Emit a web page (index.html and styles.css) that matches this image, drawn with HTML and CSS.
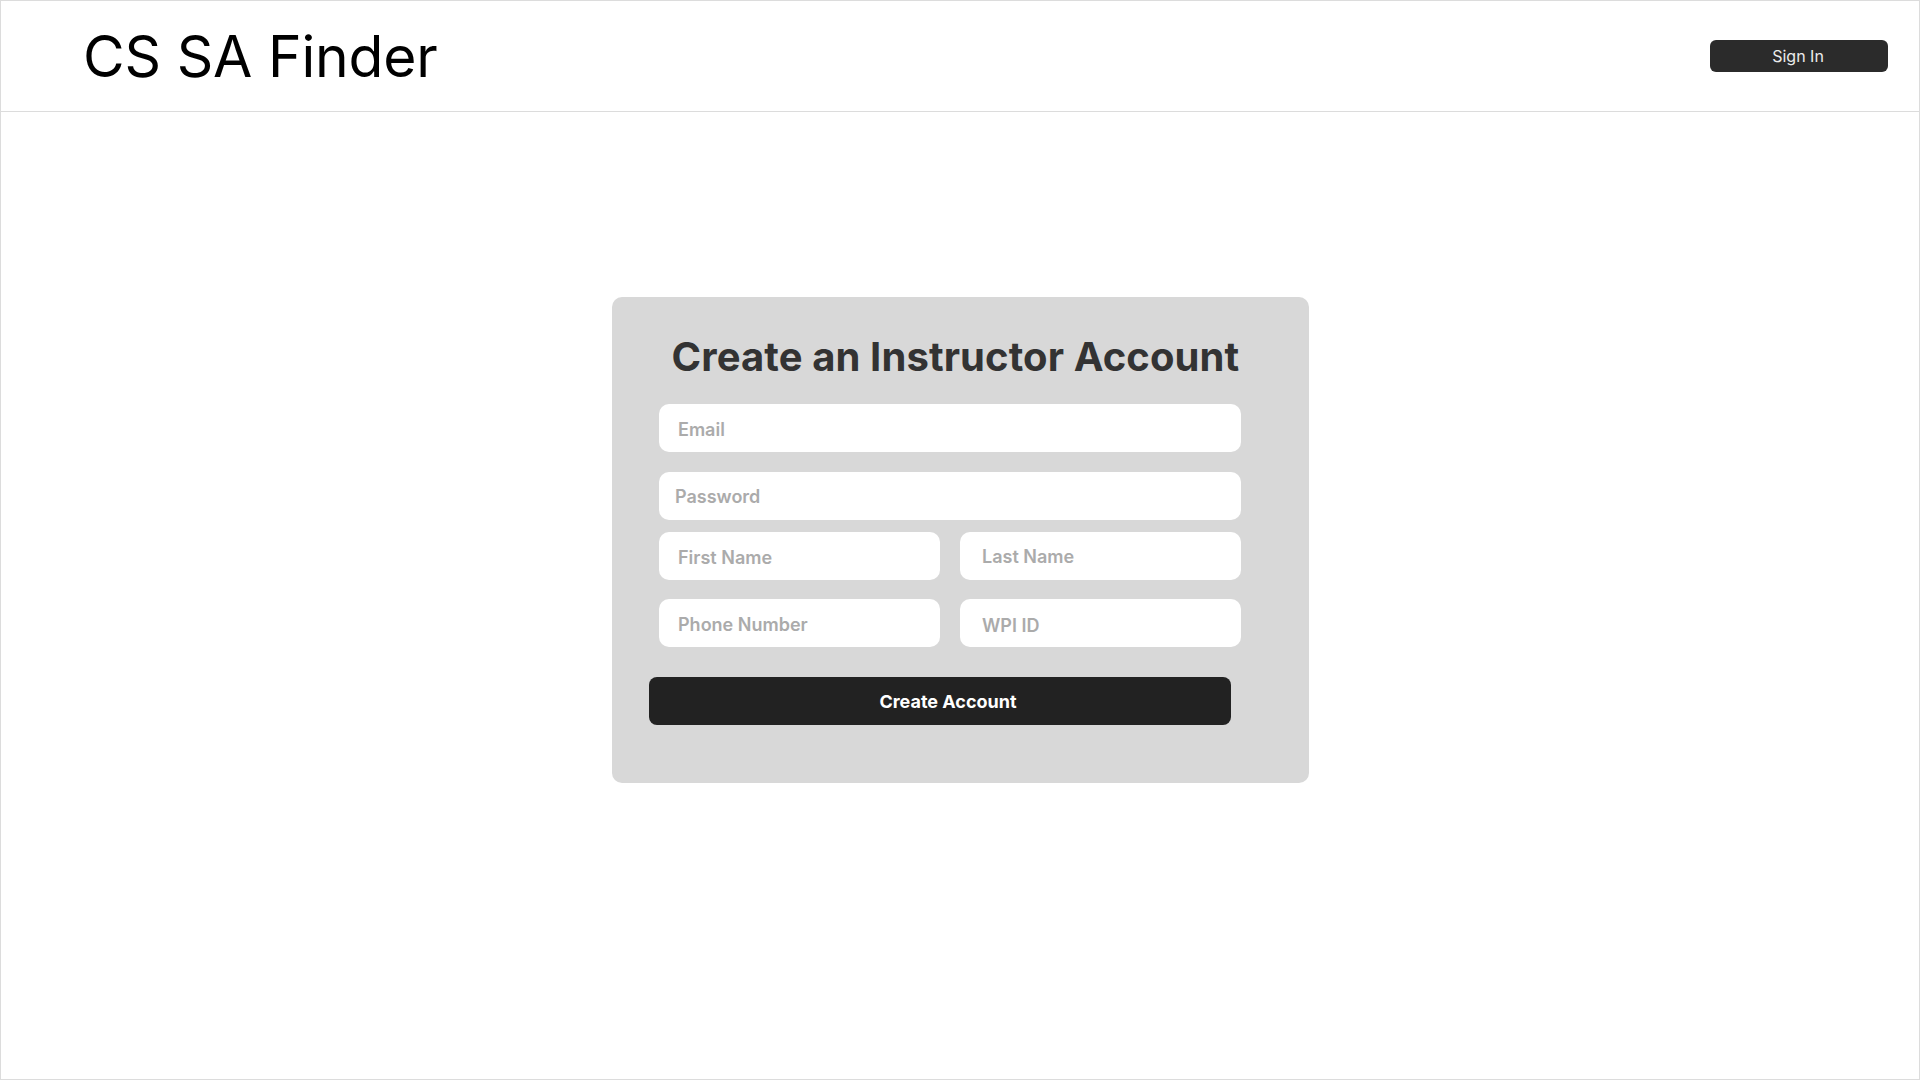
FILE: index.html
```html
<!DOCTYPE html>
<html lang="en">
<head>
<meta charset="utf-8">
<title>CS SA Finder</title>
<link rel="stylesheet" href="styles.css">
</head>
<body>
<header class="topbar">
  <div class="brand">CS SA Finder</div>
  <button class="signin" type="button">Sign In</button>
</header>
<main class="main">
  <form class="card">
    <h1 class="card-title">Create an Instructor Account</h1>
    <div class="fields">
      <input class="field field-email" type="email" placeholder="Email">
      <input class="field field-password" type="password" placeholder="Password">
      <div class="pair pair-name">
        <input class="field" type="text" placeholder="First Name">
        <input class="field field-right" type="text" placeholder="Last Name">
      </div>
      <div class="pair pair-phone">
        <input class="field" type="tel" placeholder="Phone Number">
        <input class="field field-right field-wpi" type="text" placeholder="WPI ID">
      </div>
    </div>
    <button class="submit" type="button">Create Account</button>
  </form>
</main>
</body>
</html>
```

FILE: styles.css
```css
* { box-sizing: border-box; }

html, body {
  margin: 0;
  padding: 0;
}

body {
  width: 1920px;
  height: 1080px;
  border: 1px solid #dcdcdc;
  background: #ffffff;
  font-family: Inter, "Noto Sans", "Liberation Sans", sans-serif;
  color: #000;
  overflow: hidden;
}

.topbar {
  height: 111px;
  border-bottom: 1px solid #dcdcdc;
  display: flex;
  align-items: center;
  justify-content: space-between;
  padding: 0 31px 0 82px;
}

.brand {
  font-size: 57px;
  font-weight: 400;
  line-height: 1;
  color: #000;
  letter-spacing: -0.2px;
}

.signin {
  width: 178px;
  height: 32px;
  border: none;
  border-radius: 6px;
  background: #2b2b2b;
  color: #ececec;
  font-family: inherit;
  font-size: 16px;
  font-weight: 400;
  padding: 0 2px 0 0;
  cursor: pointer;
}

.main {
  padding-top: 185px;
  display: flex;
  justify-content: center;
}

.card {
  width: 697px;
  margin-left: 1px;
  background: #d8d8d8;
  border-radius: 10px;
  padding: 36px 68px 58px 47px;
  display: flex;
  flex-direction: column;
}

.card-title {
  margin: 0 -26px 0 -15px;
  font-size: 40px;
  line-height: 48px;
  font-weight: 700;
  color: #333333;
  text-align: center;
  letter-spacing: 0.1px;
}

.fields {
  margin-top: 23px;
  display: flex;
  flex-direction: column;
}

.field {
  display: block;
  width: 100%;
  height: 48px;
  border: none;
  outline: none;
  border-radius: 10px;
  background: #ffffff;
  padding: 2px 19px 0 19px;
  font-family: inherit;
  font-size: 18px;
  font-weight: 600;
  color: #333;
}

.field::placeholder {
  color: #ababab;
  opacity: 1;
}

.field-password {
  margin-top: 20px;
  padding-left: 16px;
  padding-top: 0;
}

.pair {
  display: grid;
  grid-template-columns: 1fr 1fr;
  column-gap: 20px;
}

.pair-name { margin-top: 12px; }
.pair-phone { margin-top: 19px; }

.field-right {
  padding-left: 22px;
  padding-top: 0;
}

.field-wpi { padding-top: 4px; }

.submit {
  margin: 30px 0 0 -10px;
  width: 582px;
  height: 48px;
  border: none;
  border-radius: 8px;
  background: #222222;
  color: #ffffff;
  font-family: inherit;
  font-size: 18px;
  font-weight: 700;
  padding: 0 0 0 16px;
  cursor: pointer;
}
```
